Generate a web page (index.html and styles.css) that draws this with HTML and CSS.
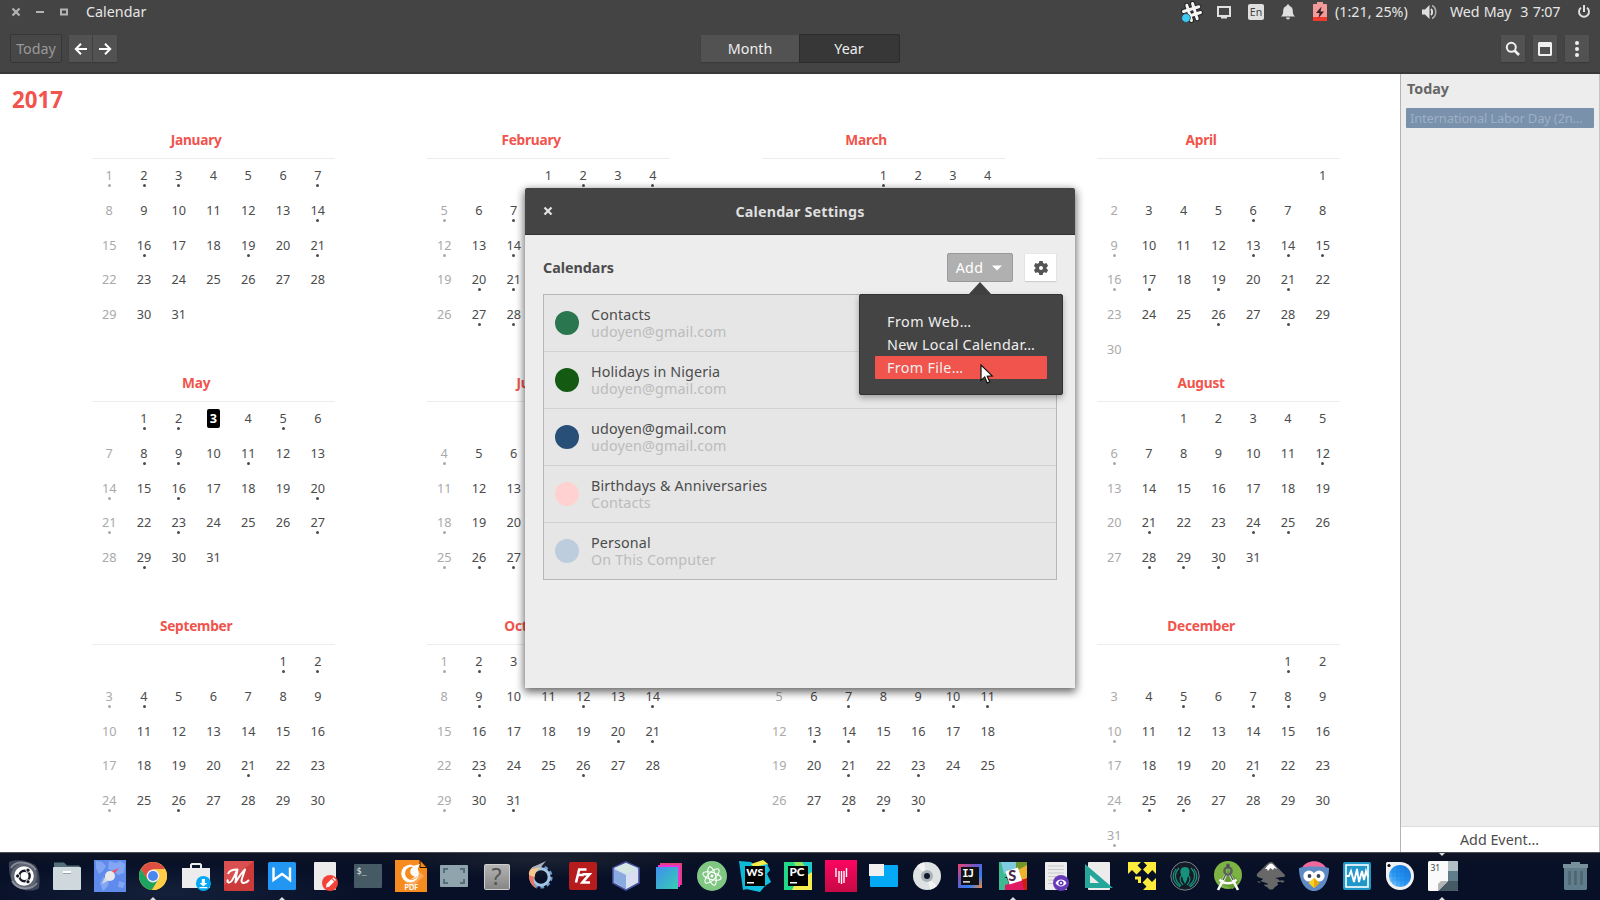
FILE: index.html
```html
<!DOCTYPE html>
<html lang="en">
<head>
<meta charset="utf-8">
<title>Calendar</title>
<link rel="stylesheet" href="styles.css">
</head>
<body>
<div class="desktop">
  <header class="panel">
    <svg class="winctl" width="60" height="12" viewBox="0 0 60 12"><path d="M1.500 2.500l7 7M8.500 2.500l-7 7" stroke="#b4b4b4" stroke-width="2.200" fill="none"/><path d="M25 5h8v2h-8z" fill="#b4b4b4"/><path d="M50 3.500h6v5h-6z" fill="none" stroke="#b4b4b4" stroke-width="2"/></svg>
    <span class="panel-title">Calendar</span>
    <div class="tray">
      <svg class="tr-slack" width="22" height="22" viewBox="0 0 22 22"><g transform="rotate(-17 11 11)" stroke="#222" stroke-width="5" stroke-linecap="round"><path d="M8 3v16M14 3v16M3 8h16M3 14h16"/><path stroke="#f4f4f4" stroke-width="3" d="M8 3v16M14 3v16M3 8h16M3 14h16"/></g><circle cx="5" cy="17" r="4.400" fill="#3cc8f0" stroke="#2b4450" stroke-width=".8"/></svg>
      <svg class="tr-disp" width="16" height="14" viewBox="0 0 16 14"><path d="M2 2h12v9H2z" fill="none" stroke="#dfdfdf" stroke-width="2"/><path d="M5 11h6v2.500H5z" fill="#dfdfdf"/></svg>
      <span class="tr-en">En</span>
      <svg class="tr-bell" width="14" height="16" viewBox="0 0 14 16"><path d="M7 .5c1 0 1.500.7 1.500 1.500 2.300.7 3.300 2.500 3.300 5 0 3 .7 4 2.200 5.500H0C1.500 11 2.200 10 2.200 7c0-2.500 1-4.300 3.300-5C5.500 1.200 6 .5 7 .5zM5 13.500h4c0 1.100-.9 2-2 2s-2-.9-2-2z" fill="#dfdfdf"/></svg>
      <svg class="tr-bat" width="14" height="19" viewBox="0 0 14 19"><path d="M4 0h6v2h3c.6 0 1 .4 1 1v15c0 .6-.4 1-1 1H1c-.6 0-1-.4-1-1V3c0-.6.4-1 1-1h3z" fill="#f39a9a"/><path d="M0 15h14v3c0 .6-.4 1-1 1H1c-.6 0-1-.4-1-1z" fill="#f03a30"/><path d="M8.500 4.500L3 11h3.500L5.500 16 11 9.500H7.500z" fill="#3a2222"/></svg>
      <span class="t-bat">(1:21, 25%)</span>
      <svg class="tr-vol" width="16" height="16" viewBox="0 0 16 16"><path d="M0 5.500h3L7.500 1v14L3 10.500H0z" fill="#dfdfdf"/><path d="M9 5c1.500 1.500 1.500 4.500 0 6" stroke="#dfdfdf" stroke-width="2" fill="none"/><path d="M10 1.500c5 2.500 5 10.500 0 13" stroke="#b0b0b0" stroke-width="1.500" fill="none"/></svg>
      <span class="t-clock">Wed May&nbsp; 3 7:07</span>
      <svg class="tr-pow" width="14" height="14" viewBox="0 0 14 14"><path d="M4 2.700a5 5 0 1 0 6 0" fill="none" stroke="#dfdfdf" stroke-width="1.900"/><path d="M6 0h2v7H6z" fill="#dfdfdf"/></svg>
    </div>
  </header>

  <nav class="toolbar">
    <button class="btn-today">Today</button>
    <div class="arrows">
      <button class="btn-flat btn-back"><svg width="14" height="14" viewBox="0 0 14 14"><path d="M13 7H2.500M7 1.800L1.800 7 7 12.200" stroke="#fff" stroke-width="2" fill="none"/></svg></button>
      <button class="btn-flat"><svg width="14" height="14" viewBox="0 0 14 14"><path d="M1 7h10.500M7 1.800L12.200 7 7 12.200" stroke="#fff" stroke-width="2" fill="none"/></svg></button>
    </div>
    <div class="views"><button class="view">Month</button><button class="view view-on">Year</button></div>
    <div class="tools">
      <button class="btn-flat"><svg width="16" height="16" viewBox="0 0 16 16"><circle cx="6.300" cy="6.300" r="4.500" fill="none" stroke="#f0f0f0" stroke-width="2"/><path d="M9.500 9.500l4.500 4.500" stroke="#f0f0f0" stroke-width="2.600"/></svg></button>
      <button class="btn-flat"><svg width="14" height="14" viewBox="0 0 14 14"><path fill-rule="evenodd" d="M1 0h12l1 1v12l-1 1H1l-1-1V1zM2 5v7h10V5z" fill="#f0f0f0"/></svg></button>
      <button class="btn-flat"><svg width="16" height="16" viewBox="0 0 16 16"><g fill="#f0f0f0"><circle cx="8" cy="2" r="2"/><circle cx="8" cy="8" r="2"/><circle cx="8" cy="14" r="2"/></g></svg></button>
    </div>
  </nav>

  <div class="workspace">
    <main class="year">
      <h1 class="year-title">2017</h1>
      <div class="months" id="months"></div>
    </main>
    <aside class="side">
      <h2 class="side-title">Today</h2>
      <div class="event">International Labor Day (2n…</div>
      <button class="add-event">Add Event…</button>
    </aside>
  </div>

  <footer class="dock">
    <div class="dock-icons">
      <svg viewBox="0 0 32 32"><circle cx="16" cy="16" r="13" fill="#4d5261"/><path d="M1 2c6-3 20-2 27 4 4 6 4 14 3 22-3 3-9 3-15 2C6 28 0 20 1 2z" fill="#7b7f8b" opacity=".45"/><path d="M3 8C8 0 22 1 28 10M29 23C23 31 9 30 4 21" stroke="#b6b8c0" stroke-width="2" fill="none" opacity=".6"/><circle cx="16" cy="16" r="9.800" fill="#fff"/><circle cx="16.500" cy="16" r="5.200" fill="none" stroke="#171a24" stroke-width="2.400"/><g fill="#171a24" stroke="#fff" stroke-width=".9"><circle cx="9.600" cy="16" r="2.100"/><circle cx="20" cy="10.200" r="2.100"/><circle cx="20" cy="21.800" r="2.100"/></g></svg>
      <svg viewBox="0 0 32 32"><path d="M3 2.500h10l3 3h12.500V14H3z" fill="#546e7a"/><rect x="2" y="7" width="28" height="23" rx="1" fill="#cfd8dc"/><rect x="12" y="11" width="8" height="2" fill="#fff"/><rect x="12" y="13" width="8" height="1" fill="#9aa5aa"/></svg>
      <svg viewBox="0 0 32 32"><rect width="32" height="32" fill="#5f8bec"/><path d="M2 1l6 1 4 4-3 5-4 3-3-6zM15 1l7 2 4-2 5 3-1 9-6 2-5-4-5-2zM9 17l6 3-1 6-5 5-3-8zM25 21l6 2-2 5-5-1z" fill="#82a6f4"/><path d="M25 8L12.500 13.500 16.500 18z" fill="#f14e5c"/><path d="M8 24l4.500-10.500L18 18.500z" fill="#d8d9dc"/><circle cx="16" cy="16" r="5" fill="#e9e9eb"/></svg>
      <svg viewBox="0 0 32 32"><circle cx="16" cy="16" r="14" fill="#ffcd46"/><path d="M3.900 9A14 14 0 0 1 28.100 9L16 9.500 10 19.500z" fill="#dd4f43"/><path d="M3.900 9A14 14 0 0 0 15 30l6.500-11H10z" fill="#1ea362"/><path d="M28.100 9.200A14 14 0 0 1 15 30l7-11 0-6-6-3.800z" fill="#ffcd46"/><circle cx="16" cy="16" r="6.400" fill="#f1f1f1"/><circle cx="16" cy="16" r="5" fill="#4b87f0"/></svg>
      <svg viewBox="0 0 32 32"><path d="M11 8V5l1-1h8l1 1v3" stroke="#eee" stroke-width="2" fill="none"/><rect x="2" y="8" width="28" height="20" fill="#ececec"/><circle cx="23.400" cy="23.400" r="7.500" fill="#03a9f4"/><path d="M21.800 19h3.200v4h2.300l-3.900 3.500-3.900-3.500h2.300zM19.500 27h7.800v1.200h-7.800z" fill="#fff"/></svg>
      <svg viewBox="0 0 32 32"><rect x="1" y="1" width="30" height="30" rx="1" fill="#cc3a3c"/><path d="M1 1h30L1 25z" fill="#e05a58" opacity=".7"/><path d="M5 19.500c-2 3.500 2 4 4 1 2-3 3.500-7 5.500-11-4 0-8.500 1-9.500 4.500m9.500-4.500c-1 4-1.500 8-2 13 3-5 6-10 9.500-13-1 4-3 8-3.500 11 0 3.500 4 3.500 7.500-.5" fill="none" stroke="#fff" stroke-width="2" stroke-linejoin="round"/></svg>
      <svg viewBox="0 0 32 32"><rect x="2" y="2" width="28" height="28" rx="1.500" fill="#2196f3"/><path d="M7.500 7.500v12.500l7-5 1.500-1 1.500 1 6.500 5V7.500" fill="none" stroke="#fff" stroke-width="2.400"/></svg>
      <svg viewBox="0 0 32 32"><rect x="5" y="2" width="22" height="28" rx="1" fill="#ececec"/><circle cx="21" cy="23" r="8" fill="#f44336"/><path d="M17.500 24l5-5 2.700 2.700-5 5-3.200.7zM23.300 18.300l1-1 2.700 2.700-1 1z" fill="#fff"/></svg>
      <svg viewBox="0 0 32 32"><rect x="2" y="4" width="28" height="24" rx="1" fill="#455a64"/><text x="4.500" y="13.500" class="i-mono" font-size="8.500">$_</text></svg>
      <svg viewBox="0 0 32 32"><path d="M0 0h24.500l7.500 8v24H0z" fill="#f68b1f"/><path d="M15 3l14 13-12 11-8-6z" fill="#fba85a"/><path d="M25 0v7.500h7z" fill="#f68b1f" stroke="#221405" stroke-width="1"/><circle cx="15" cy="13.500" r="8.800" fill="#fff"/><path d="M18 7a6.500 6.500 0 1 0 4.500 9 5 5 0 1 1-4.500-9z" fill="#f68b1f"/><path d="M15 18c4 1 6-2 5-6l2-2c2 5-2 11-7 8z" fill="#fff"/><path d="M18 6l7-2-3.500 7z" fill="#fff"/><text x="9.500" y="29.800" class="i-sans" font-size="7" fill="#fff">PDF</text></svg>
      <svg viewBox="0 0 32 32"><rect x="2" y="5" width="28" height="22" rx="1" fill="#90a4ae"/><path d="M6 13V9h4M22 9h4v4M26 19v4h-4M10 23H6v-4" stroke="#546e7a" stroke-width="2" fill="none"/></svg>
      <svg viewBox="0 0 32 32"><defs><linearGradient id="gq" x2="0" y2="1"><stop stop-color="#b5b5b5"/><stop offset="1" stop-color="#858585"/></linearGradient></defs><rect x="3.500" y="4.500" width="25" height="25" rx="1" fill="url(#gq)" stroke="#cfcfcf"/><text x="10.500" y="24.500" class="i-reg" font-size="23" fill="#555">?</text></svg>
      <svg viewBox="0 0 32 32"><circle cx="17" cy="17" r="10.200" fill="none" stroke="#6f9cc8" stroke-width="2.800" stroke-dasharray="3.600 2.810"/><circle cx="17" cy="17" r="8.200" fill="none" stroke="#a4c6e4" stroke-width="3"/><path d="M17 5C10 5 4 9 5 15c0 5 2 10 7 13-2-4-4-8-1-12 0-4 2-6 6-9z" fill="#f6c78c"/><path d="M5 15c0 6 2 10 8 14-3-4-4-8-3-12z" fill="#e8766a"/><path d="M8 7.500L22 1l-5 6-9 2z" fill="#a8b1bd"/></svg>
      <svg viewBox="0 0 32 32"><rect x="2" y="2" width="28" height="28" rx="2" fill="#b71c1c"/><path d="M9 22.500l3.200-13h7.300M10.800 15h6M15.500 14.200h7L15.500 22.500h7.500" fill="none" stroke="#fff" stroke-width="2.600"/></svg>
      <svg viewBox="0 0 32 32"><path d="M16 2l13 6v15l-13 7-13-7V8z" fill="#cfdcf0" stroke="#4752a0" stroke-width="1.600"/><path d="M16 3l12 5-12 6L4 8z" fill="#d5e8e4"/><path d="M4 9l12 6v14L4 22z" fill="#8aabe2"/><path d="M28 9l-12 6v14l12-7z" fill="#d9dff0"/></svg>
      <svg viewBox="0 0 32 32"><defs><linearGradient id="gs" x1="0" y1="0" x2="1" y2="1"><stop stop-color="#3f8ef0"/><stop offset="1" stop-color="#36cfb0"/></linearGradient></defs><path d="M7 3h22v22H7z" fill="#e0407c"/><path d="M5 5h22v22H5z" fill="#f032d8"/><path d="M3 7h22v22H3z" fill="url(#gs)"/></svg>
      <svg viewBox="0 0 32 32"><circle cx="16" cy="16" r="15" fill="#81c784"/><g fill="none" stroke="#fff" stroke-width="1.100"><ellipse cx="16" cy="16" rx="9.500" ry="3.600" transform="rotate(15 16 16)"/><ellipse cx="16" cy="16" rx="9.500" ry="3.600" transform="rotate(75 16 16)"/><ellipse cx="16" cy="16" rx="9.500" ry="3.600" transform="rotate(135 16 16)"/></g><circle cx="16" cy="16" r="1.400" fill="#fff"/></svg>
      <svg viewBox="0 0 32 32"><path d="M0 1l12 1 4 4-3 22-9 2z" fill="#10b8d8"/><path d="M12 4L24 0l5 4-8 10z" fill="#f4ee4a"/><path d="M20 6l8-2 3 6-3 4 4 8-6 4-5 6-14-3z" fill="#12bfe0"/><rect x="6" y="6" width="20" height="20" fill="#000"/><text x="7.300" y="16.300" class="i-sans" font-size="10" textLength="17" lengthAdjust="spacingAndGlyphs" fill="#fff">WS</text><path d="M8 22h7v1.500H8z" fill="#fff"/></svg>
      <svg viewBox="0 0 32 32"><path d="M2 2h14l-4 28H2z" fill="#21d789"/><path d="M14 2h16v12L18 24z" fill="#1bc9c9"/><path d="M12 2h8l4 6-8 6z" fill="#8fe85e"/><path d="M30 12v18H10l4-8z" fill="#f5ee4e"/><rect x="6" y="6" width="20" height="20" fill="#000"/><text x="7.500" y="16.300" class="i-sans" font-size="10.500" fill="#fff" textLength="15" lengthAdjust="spacingAndGlyphs">PC</text><path d="M8 22h7v1.500H8z" fill="#fff"/></svg>
      <svg viewBox="0 0 32 32"><defs><linearGradient id="gp" x2="0" y2="1"><stop stop-color="#fb0560"/><stop offset="1" stop-color="#c70a46"/></linearGradient></defs><rect width="32" height="32" fill="url(#gp)"/><path d="M11 8v9M14 11v12M16.500 11v13M19 11v12M21.500 8v9" stroke="#fff" stroke-width="1.400"/></svg>
      <svg viewBox="0 0 32 32"><rect x="2" y="5" width="28" height="22" rx="1" fill="#03a9f4"/><rect x="1" y="4" width="15" height="12" fill="#f0f0f0"/></svg>
      <svg viewBox="0 0 32 32"><circle cx="16" cy="16" r="14" fill="#dfe2e3"/><path d="M16 16L6 6a14 14 0 0 1 7-3.700zM16 16l10 10a14 14 0 0 1-7 3.700z" fill="#f3f4f4"/><circle cx="16" cy="16" r="6" fill="#a9b3b8"/><circle cx="16" cy="16" r="3" fill="#0d1a2c"/></svg>
      <svg viewBox="0 0 32 32"><defs><linearGradient id="gi" x1="0" y1="0" x2="1" y2="1"><stop stop-color="#f0406a"/><stop offset=".4" stop-color="#6a5ac8"/><stop offset=".7" stop-color="#2f7df6"/><stop offset="1" stop-color="#f58a3c"/></linearGradient></defs><rect x="4" y="4" width="24" height="24" fill="url(#gi)"/><rect x="7" y="7" width="18" height="18" fill="#111"/><text x="8.300" y="17" class="i-ij" font-size="10.500">IJ</text><path d="M9 21h7v1.700H9z" fill="#ccc"/></svg>
      <svg viewBox="0 0 32 32"><path d="M2 2h13l-4 14-9 5z" fill="#3eb991"/><path d="M4 2h16l1 7-14 5z" fill="#7fcbe0"/><path d="M19 2h11v6l-11 4z" fill="#72962a"/><path d="M21 10l9-5v17l-6 2z" fill="#ecb32e"/><path d="M2 18l8 0 4 12H2z" fill="#3eb991"/><path d="M8 25l18-6 3 11H8z" fill="#df1a62"/><path d="M25 20l5-2v12h-3z" fill="#ce1e10"/><path d="M8.500 11.500L21 7.500l4 13-12.500 4z" fill="#fff"/><text x="11.300" y="21.300" class="i-sans" font-size="14.500" fill="#4a2a4c">S</text></svg>
      <svg viewBox="0 0 32 32"><rect x="5" y="2" width="22" height="28" rx="1" fill="#ececec"/><path d="M8 6h16M8 9.500h16M8 13h16M8 16.500h8M8 20h6M8 23.500h5" stroke="#c9c9c9" stroke-width="1"/><circle cx="21" cy="23" r="8" fill="#673ab7"/><path d="M15.500 23c2.500-4.600 8.500-4.600 11 0-2.500 4.600-8.500 4.600-11 0z" fill="#fff"/><circle cx="21" cy="23" r="2.600" fill="#673ab7"/><circle cx="21" cy="23" r="1.100" fill="#fff"/></svg>
      <svg viewBox="0 0 32 32"><rect x="5" y="2" width="22" height="28" rx="1" fill="#ececec"/><path fill-rule="evenodd" d="M2 4v24h28zM7 15v8h9z" fill="#26a69a"/></svg>
      <svg viewBox="0 0 32 32"><path d="M2 2h13l-3.500 3.500 4 4-5 5-4.500-4.500L2 14zM30 2v12l-3.700-4-4.300 4.500-5-5 4-4L17.500 2zM30 30H17l3.500-3.500-4-4 5-5 4.500 4.500 4-4zM9 16.500h6V23h-3v-3.500H9z" fill="#ffeb3b"/></svg>
      <svg viewBox="0 0 32 32"><circle cx="16" cy="16" r="14.200" fill="#151c28" stroke="#77808a" stroke-width="1"/><path d="M16 7c4 0 5 3 4.500 6S18 17 18 20l-2 4-2-4c0-3-2-4-2.500-7S12 7 16 7z" fill="#17907c"/><path d="M10 8c-5 5-5 12 2 18M7 9c-5 7-3 13 4 18M22 8c5 5 5 12-2 18M25 9c5 7 3 13-4 18M13 15c-3 3-2 7 1 10M19 15c3 3 2 7-1 10" stroke="#17907c" stroke-width="1.200" fill="none"/></svg>
      <svg viewBox="0 0 32 32"><circle cx="16" cy="15" r="14" fill="#7cb342"/><path d="M16 10l11 11-6 8-9-4z" fill="#659a33"/><path d="M14.800 13L6 30M17.200 13L26 30M7.500 19.500c4 5 13 5 17 0" stroke="#fafafa" stroke-width="2.600" fill="none"/><circle cx="16" cy="11" r="3.600" fill="none" stroke="#5a5f60" stroke-width="2.400"/><path d="M15 4.500h2V8h-2zM14 14l-3 6M18 14l3 6" stroke="#5a5f60" stroke-width="1.500"/></svg>
      <svg viewBox="0 0 32 32"><path d="M16 2c2 0 3 2 5 4l8 8c2 2 1 3-2 3l-7 1c2 1 4 1 4 2s3 1 2 2l-3 0c-2 1 1 2 0 3-2 1-3 2-4 3-1 2-5 2-6 0 0-1-4-2-4-3 1-1 4 0 4-1s-6-2-7-3 2-1 2-2-5-1-6-3 1-3 3-5l6-6c2-2 3-3 5-3z" fill="#686868"/><path d="M16 3.500c1.500 0 4 3 6 5.500l-3-1-1 2-2.500-2-2.500 3-1-2-2 0c2-2.500 4-5.500 6-5.500z" fill="#fff"/><path d="M2 21l4 1-2 1zM25 20l5 1-3 2z" fill="#686868"/></svg>
      <svg viewBox="0 0 32 32"><path d="M4 8C8-1 24-1 28 8z" fill="#f0699c"/><path d="M1 8c6-2 24-2 30 0 0 13-6 23-15 23S1 21 1 8z" fill="#5f8bc4"/><circle cx="11" cy="16" r="5.600" fill="#fff"/><circle cx="21" cy="16" r="5.600" fill="#fff"/><circle cx="11.500" cy="16" r="1.900" fill="#37474f"/><circle cx="20.500" cy="16" r="1.900" fill="#37474f"/><path d="M16 18l5.500 5-5.500 5-5.500-5z" fill="#fbd21c"/><path d="M16 18l5.500 5-5.500 5z" fill="#eba713"/></svg>
      <svg viewBox="0 0 32 32"><rect x="2" y="2" width="28" height="28" rx="2" fill="#2196c8"/><rect x="5" y="5" width="22" height="22" fill="none" stroke="#fff" stroke-width="1.600"/><path d="M5 16h3l2-5 3 11 3-13 2 13 3-11 2 9 2-9 2 6" fill="none" stroke="#fff" stroke-width="1.900"/></svg>
      <svg viewBox="0 0 32 32"><defs><linearGradient id="gb" x1="1" y1="0" x2="0" y2="1"><stop stop-color="#0d6fd6"/><stop offset=".6" stop-color="#2e9bf4"/><stop offset="1" stop-color="#9ed6ff"/></linearGradient></defs><path d="M3 2h13a14 14 0 1 1-14 14V3z" fill="#f1f1f1"/><circle cx="5" cy="5.500" r="1.600" fill="#111"/><circle cx="16" cy="16" r="11" fill="url(#gb)"/><path d="M9 8v16M13 6v20M17 5v22M21 6v20M6 12h20M5 16h22M6 20h20" stroke="#1279dc" stroke-width=".5" opacity=".6"/></svg>
      <svg viewBox="0 0 32 32"><rect x="1" y="1" width="30" height="30" rx="1.500" fill="#fafafa"/><path d="M21 1h9l1 1v9H21z" fill="#b0bec5"/><path d="M21 11h10v10H21z" fill="#607d8b"/><path d="M21 21h10v9l-1 1H11z" fill="#455a64"/><path d="M11 31V24l3-3h7z" fill="#b4b4b4"/><text x="3.500" y="11" class="i-reg" font-size="8.500" fill="#37474f">31</text></svg>
      <svg class="trash" viewBox="0 0 32 32"><path d="M4 4h8V2h9v2h8v4H4z" fill="#78909c"/><path d="M5 8h23v21l-1 1H6l-1-1z" fill="#607d8b"/><path d="M10.500 11v14M16.500 11v14M22.500 11v14" stroke="#4e6570" stroke-width="2.500"/></svg>
    </div>
    <i class="run run-a"></i><i class="run run-b"></i><i class="run run-c"></i><i class="run run-d"></i><i class="run run-top"></i>
  </footer>

  <section class="dialog" id="dialog">
    <header class="dlg-head">
      <svg class="dlg-close" width="10" height="10" viewBox="0 0 10 10"><path d="M1.500 1.500l7 7M8.500 1.500l-7 7" stroke="#e4e4e4" stroke-width="2.200"/></svg>
      <span>Calendar Settings</span>
    </header>
    <div class="dlg-body">
      <div class="dlg-bar">
        <span class="dlg-label">Calendars</span>
        <button class="add">Add<svg width="10" height="6" viewBox="0 0 10 6"><path d="M0 .5h10L5 5.500z" fill="#fff"/></svg></button>
        <button class="gear"><svg width="16" height="16" viewBox="0 0 16 16"><path fill-rule="evenodd" d="M6.300 1h3.400l.4 2 1.400.8 2-.7 1.600 2.900-1.500 1.300v1.400l1.500 1.300-1.600 2.900-2-.7-1.400.8-.4 2H6.300l-.4-2-1.400-.8-2 .7L.900 10l1.500-1.300V7.300L.9 6l1.600-2.900 2 .7L5.900 3zM8 6a2 2 0 1 0 0 4 2 2 0 0 0 0-4z" fill="#555"/></svg></button>
      </div>
      <ul class="cals">
        <li><i class="dot c1"></i><div><b>Contacts</b><small>udoyen@gmail.com</small></div></li>
        <li><i class="dot c2"></i><div><b>Holidays in Nigeria</b><small>udoyen@gmail.com</small></div></li>
        <li><i class="dot c3"></i><div><b>udoyen@gmail.com</b><small>udoyen@gmail.com</small></div></li>
        <li><i class="dot c4"></i><div><b>Birthdays &amp; Anniversaries</b><small>Contacts</small></div></li>
        <li><i class="dot c5"></i><div><b>Personal</b><small>On This Computer</small></div></li>
      </ul>
    </div>
    <div class="popover">
      <svg class="tip" width="24" height="13" viewBox="0 0 24 13"><path d="M0 13L12 0l12 13z" fill="#404040"/></svg>
      <div class="item item-web">From Web…</div>
      <div class="item">New Local Calendar…</div>
      <div class="item item-on">From File…</div>
    </div>
  </section>
  <svg class="cursor" width="14" height="21" viewBox="0 0 14 21"><path d="M1 1v15.500l3.700-3.400 2.500 5.900 2.600-1.100-2.500-5.700 4.900-.3z" fill="#fff" stroke="#111" stroke-width="1.200"/></svg>
</div>
<script src="app.js"></script>
</body>
</html>
```
FILE: styles.css
```css
* { box-sizing: border-box; }
body { margin: 0; font-family: "Noto Sans", "Open Sans", sans-serif; font-size: 14.3px; color: #4c4c4c; }
button { font: inherit; color: inherit; border: 0; padding: 0; margin: 0; display: flex; align-items: center; justify-content: center; }
span { white-space: nowrap; }
.desktop { position: relative; width: 1600px; height: 900px; overflow: hidden; display: flex; flex-direction: column; background: #fff; }

.panel { height: 24px; background: #444; color: #e6e6e6; display: flex; align-items: center; padding-left: 11px; }
.winctl { margin-right: 15px; }
.panel-title { line-height: 24px; }
.tray { margin-left: auto; display: flex; align-items: center; align-self: flex-start; height: 23px; padding-right: 9px; }
.tr-slack { margin-right: 13px; }
.tr-disp { margin-right: 16px; }
.tr-en { width: 16px; height: 16px; background: #dfdfdf; color: #444; border-radius: 2px; font-size: 10.500px; line-height: 16px; text-align: center; margin-right: 17px; }
.tr-bell { margin-right: 18px; }
.tr-bat { margin-right: 8px; }
.t-bat { width: 73px; margin-right: 14px; }
.tr-vol { margin-right: 12px; }
.t-clock { width: 110px; margin-right: 17px; letter-spacing: -.22px; word-spacing: 1px; }

.toolbar { height: 50px; background: #444; border-bottom: 2px solid #383838; display: flex; padding: 10px 10px 0; color: #eee; }
.btn-today { width: 52px; height: 29px; border: 1px solid #363636; border-radius: 2px; background: #474747; color: #999; }
.arrows { display: flex; gap: 1px; margin: 1px 0 0 7px; }
.btn-flat { width: 24px; height: 27px; background: #525252; box-shadow: 0 1px 1px #3a3a3a; }
.btn-back { width: 23px; }
.views { display: flex; margin-left: 584px; height: 29px; }
.view { width: 98px; background: #525252; margin: 1px 0; height: 27px; box-shadow: 0 1px 1px #3a3a3a; }
.view-on { width: 101px; background: #373737; border: 1px solid #2c2c2c; height: 29px; margin: 0; border-radius: 0 2px 2px 0; box-shadow: none; padding-right: 1px; }
.tools { display: flex; gap: 8px; margin: 1px 1px 0 auto; }

.workspace { height: 778px; display: flex; }
.year { width: 1400px; overflow: hidden; }
.year-title { margin: 7px 0 0 12px; height: 36px; line-height: 37px; font-size: 22.300px; font-weight: 700; color: #f0544c; }
.months { margin: 9px 0 0 57px; display: grid; grid-template-columns: repeat(4, 278.300px); column-gap: 56.700px; grid-auto-rows: 243px; }
.month-name { margin: 0; font-size: 13.700px; letter-spacing: -.25px; line-height: 28px; height: 32px; text-align: center; color: #f0544c; font-weight: 700; }
.days { margin-left: 34.800px; border-top: 1px solid #ececec; display: grid; grid-template-columns: repeat(7, 34.780px); grid-auto-rows: 34.800px; }
.day { position: relative; font-size: 12.700px; line-height: 33px; text-align: center; }
.day-sun { color: #aaa; }
.day-busy::after { content: ""; position: absolute; left: 16px; top: 25px; width: 3px; height: 3px; border-radius: 50%; background: currentColor; }
.day-today span { background: #000; color: #fff; font-weight: 700; border-radius: 2px; padding: 1px 2.500px; display: inline-block; line-height: 17px; }
.day-covered { visibility: hidden; }

.side { width: 200px; background: #ededed; border-left: 1px solid #b4b4b4; border-right: 1px solid #c4c4c4; display: flex; flex-direction: column; }
.side-title { margin: 4px 0 0 6px; font-size: 14.300px; line-height: 22px; font-weight: 700; color: #666; }
.event { margin: 8px 5px 0; height: 20px; line-height: 20px; background: #7991ab; color: #9db0c5; padding-left: 4px; border-radius: 1px; font-size: 13px; letter-spacing: -.2px; white-space: nowrap; overflow: hidden; }
.add-event { margin-top: auto; height: 26px; background: #fff; border-top: 1px solid #ddd; padding-right: 1px; }

.dock { position: relative; height: 48px; background: radial-gradient(ellipse 200px 30px at 170px 40px, #14203a, transparent), radial-gradient(ellipse 160px 20px at 540px 6px, #1b2230, transparent), linear-gradient(#0f1424, #071027 14px); border-top: 1px solid #4a4d58; }
.dock-icons { display: flex; gap: 11px; padding: 7px 9px 0 8px; }
.dock-icons svg { width: 32px; height: 32px; flex: none; }
.dock-icons .trash { margin-left: auto; }
.i-mono { font-family: "DejaVu Sans Mono", monospace; fill: #eceff1; }
.i-ij { font-family: "DejaVu Sans Mono", monospace; font-weight: 700; fill: #fff; letter-spacing: -.8px; }
.i-sans { font-family: Lato, sans-serif; font-weight: 900; }
.i-reg { font-family: "Noto Sans", sans-serif; }
.run { position: absolute; bottom: 0; width: 0; border: 3px solid transparent; border-top: 0; border-bottom: 3px solid #ddd; }
.run-a { left: 150px; } .run-b { left: 279px; } .run-c { left: 1010px; } .run-d { left: 1439px; }
.run-top { left: 1439px; top: 0; bottom: auto; border-bottom: 0; border-top: 3px solid #ddd; }

.dialog { position: absolute; left: 525px; top: 188px; width: 550px; height: 500px; background: #ededed; border-radius: 2px 2px 0 0; box-shadow: 0 3px 9px 1px rgba(0,0,0,.6); }
.dlg-head { height: 47px; background: #444; border-bottom: 1px solid #333; border-radius: 2px 2px 0 0; display: grid; grid-template-columns: 36px 1fr 36px; align-items: center; color: #dedede; font-weight: 700; text-align: center; letter-spacing: .17px; }
.dlg-close { margin-left: 18px; }
.dlg-body { padding: 18px 18px 0; }
.dlg-bar { display: flex; height: 29px; align-items: center; font-weight: 700; }
.dlg-label { margin-right: auto; }
.add { width: 66px; height: 29px; background: #b0b0b0; border: 1px solid #999; border-radius: 2px; color: #fff; font-weight: 400; gap: 9px; padding-right: 2px; letter-spacing: .3px; }
.gear { width: 31px; height: 27px; margin: 0 1px 0 12px; background: #fff; box-shadow: 0 1px 1px #d0d0d0, 0 0 1px #ccc; }
.cals { list-style: none; margin: 12px 0 0; padding: 0; border: 1px solid #b6b6b6; background: #e6e6e6; }
.cals li { height: 57px; border-bottom: 1px solid #d2d2d2; display: flex; align-items: center; padding-left: 11px; }
.cals li:last-child { height: 56px; border-bottom: 0; }
.dot { width: 24px; height: 24px; border-radius: 50%; margin-right: 12px; }
.c1 { background: #2a774f; } .c2 { background: #145a12; } .c3 { background: #284f78; } .c4 { background: #ffd1d1; } .c5 { background: #bdcddd; }
.cals b, .cals small { display: block; width: max-content; font-weight: 400; font-size: 14.300px; line-height: 17px; letter-spacing: .14px; }
.cals small { color: #bcbcbc; }
.popover { position: absolute; left: 334px; top: 106px; width: 204px; height: 101px; background: #444; border: 1px solid #333; border-radius: 2px; padding: 15px; color: #eee; box-shadow: 0 3px 6px rgba(0,0,0,.3); }
.tip { position: absolute; left: 108px; top: -13px; }
.item { height: 23px; line-height: 23px; padding-left: 12px; border-radius: 1px; letter-spacing: .35px; white-space: nowrap; }
.item-web { letter-spacing: .5px; }
.item-on { background: #f0544c; }
.cursor { position: absolute; left: 980px; top: 364px; }
```
FILE: app.js
```js
const names = ["January", "February", "March", "April", "May", "June", "July", "August", "September", "October", "November", "December"];
const busy = [
  [1, 2, 3, 7, 14, 16, 19, 21], [2, 4, 5, 7, 12, 14, 20, 21, 27, 28], [1],
  [6, 9, 13, 14, 15, 16, 17, 19, 21, 26, 28],
  [1, 2, 5, 8, 9, 11, 14, 16, 20, 21, 23, 27, 29],
  [4, 18, 25, 26, 27], [], [6, 12, 21, 24, 25, 28, 29, 30],
  [1, 2, 3, 4, 21, 24, 26], [1, 2, 9, 12, 14, 20, 21, 23, 26, 29, 31],
  [7, 10, 11, 13, 14, 21, 23, 28, 29, 30], [1, 5, 7, 8, 10, 21, 24, 25, 26, 31]
];
const root = document.getElementById("months");
names.forEach((name, m) => {
  const first = new Date(2017, m, 1).getDay();
  const count = new Date(2017, m + 1, 0).getDate();
  let cells = "";
  for (let d = 1; d <= count; d++) {
    let cls = "day";
    if ((first + d - 1) % 7 === 0) cls += " day-sun";
    if (busy[m].includes(d)) cls += " day-busy";
    if (m === 4 && d === 3) cls += " day-today";
    const start = d === 1 ? ` style="grid-column-start:${first + 1}"` : "";
    cells += `<div class="${cls}"${start}><span>${d}</span></div>`;
  }
  root.insertAdjacentHTML("beforeend", `<section class="month"><h2 class="month-name"><span>${name}</span></h2><div class="days">${cells}</div></section>`);
});

// Labels that lie wholly behind the open dialog are not painted.
const area = document.getElementById("dialog").getBoundingClientRect();
root.querySelectorAll("span").forEach((label) => {
  const r = label.getBoundingClientRect();
  if (r.left >= area.left && r.right <= area.right && r.top >= area.top && r.bottom <= area.bottom) {
    label.parentElement.classList.add("day-covered");
  }
});
```
